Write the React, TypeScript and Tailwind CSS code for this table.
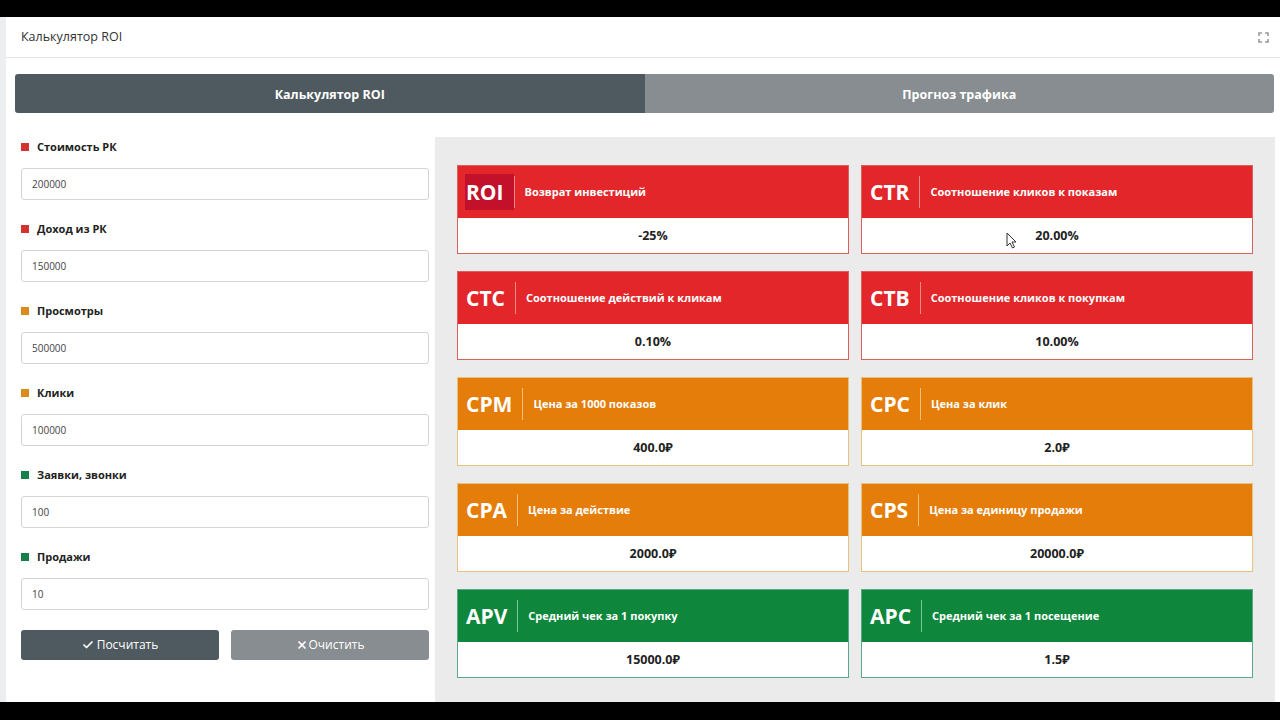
import React from 'react'
import { Check, X } from 'lucide-react'

type Tone = 'red' | 'orange' | 'green'

const TONES: Record<Tone, { head: string; border: string; divider: string; square: string }> = {
  red: { head: 'bg-[#e3262a]', border: 'border-[#d9605c]', divider: 'bg-[#f08a86]', square: 'bg-[#d13330]' },
  orange: { head: 'bg-[#e47d09]', border: 'border-[#e6c27a]', divider: 'bg-[#f6c27a]', square: 'bg-[#dc8a1c]' },
  green: { head: 'bg-[#0e873c]', border: 'border-[#58a98a]', divider: 'bg-[#7cc79a]', square: 'bg-[#17804a]' },
}

const FIELDS: { label: string; value: string; tone: Tone }[] = [
  { label: 'Стоимость РК', value: '200000', tone: 'red' },
  { label: 'Доход из РК', value: '150000', tone: 'red' },
  { label: 'Просмотры', value: '500000', tone: 'orange' },
  { label: 'Клики', value: '100000', tone: 'orange' },
  { label: 'Заявки, звонки', value: '100', tone: 'green' },
  { label: 'Продажи', value: '10', tone: 'green' },
]

const METRICS: { abbr: string; title: string; value: string; tone: Tone; active?: boolean; cursor?: boolean }[] = [
  { abbr: 'ROI', title: 'Возврат инвестиций', value: '-25%', tone: 'red', active: true },
  { abbr: 'CTR', title: 'Соотношение кликов к показам', value: '20.00%', tone: 'red', cursor: true },
  { abbr: 'CTC', title: 'Соотношение действий к кликам', value: '0.10%', tone: 'red' },
  { abbr: 'CTB', title: 'Соотношение кликов к покупкам', value: '10.00%', tone: 'red' },
  { abbr: 'CPM', title: 'Цена за 1000 показов', value: '400.0₽', tone: 'orange' },
  { abbr: 'CPC', title: 'Цена за клик', value: '2.0₽', tone: 'orange' },
  { abbr: 'CPA', title: 'Цена за действие', value: '2000.0₽', tone: 'orange' },
  { abbr: 'CPS', title: 'Цена за единицу продажи', value: '20000.0₽', tone: 'orange' },
  { abbr: 'APV', title: 'Средний чек за 1 покупку', value: '15000.0₽', tone: 'green' },
  { abbr: 'APC', title: 'Средний чек за 1 посещение', value: '1.5₽', tone: 'green' },
]

const FullscreenIcon = () => (
  <svg width="11" height="11" viewBox="0 0 11 11" fill="none" stroke="#9a9a9a" strokeWidth="1.6">
    <path d="M1 4V1h3M7 1h3v3M10 7v3H7M4 10H1V7" />
  </svg>
)

const Cursor = () => (
  <svg className="absolute left-[144px] top-[14px]" width="11" height="17" viewBox="0 0 11 17">
    <path d="M1 1v13l3-3 2.5 5 2-1-2.5-5H10z" fill="#fff" stroke="#333" strokeWidth="1" strokeLinejoin="round" />
  </svg>
)

const Field: React.FC<{ label: string; value: string; tone: Tone }> = ({ label, value, tone }) => (
  <div className="flex flex-col">
    <div className="flex h-[14px] items-center gap-[8px]">
      <span className={'h-[8px] w-[8px] ' + TONES[tone].square} />
      <span className="text-[11px] font-bold text-[#222]">{label}</span>
    </div>
    <input
      readOnly
      value={value}
      className="mt-[14px] h-[32px] w-full rounded-[3px] border border-[#d4d4d4] bg-white px-[10px] text-[10px] text-[#444] outline-none"
    />
  </div>
)

const MetricCard: React.FC<(typeof METRICS)[number]> = ({ abbr, title, value, tone, active, cursor }) => {
  const t = TONES[tone]
  return (
    <div className={'flex h-[89px] flex-col border ' + t.border}>
      <div className={'flex h-[52px] shrink-0 items-center pl-[7px] ' + t.head}>
        <span
          className={
            'flex h-[36px] items-center pl-[1px] pr-[10px] text-[21px] font-bold leading-none text-white ' +
            (active ? 'bg-[#c3112b]' : '')
          }
        >
          {abbr}
        </span>
        <span className={'h-[32px] w-px ' + t.divider} />
        <span className="pl-[10px] text-[11px] font-bold text-white">{title}</span>
      </div>
      <div className="relative flex flex-1 items-center justify-center bg-white pt-[1px] text-[12.5px] font-bold text-[#222]">
        {value}
        {cursor && <Cursor />}
      </div>
    </div>
  )
}

export default function App() {
  return (
    <div className="flex h-[720px] w-[1280px] flex-col overflow-hidden bg-black font-['Open_Sans','Noto_Sans',sans-serif]">
      <div className="h-[17px] shrink-0 bg-black" />
      <div className="flex h-[685px] shrink-0 bg-[#eceeef] pl-[6px]">
        <div className="flex flex-1 flex-col bg-white">
          <div className="flex h-[41px] shrink-0 items-center justify-between border-b border-[#e4e4e4] pl-[15px] pr-[11px]">
            <span className="text-[12.5px] text-[#333]">Калькулятор ROI</span>
            <FullscreenIcon />
          </div>

          <div className="flex flex-1 flex-col pl-[9px] pr-[5px] pt-[16px]">
            <div className="mr-[1px] grid h-[39px] shrink-0 grid-cols-2 overflow-hidden rounded-[3px] text-[12.5px] font-bold text-white">
              <div className="flex items-center justify-center pt-[3px] bg-[#4f5a60]">Калькулятор ROI</div>
              <div className="flex items-center justify-center pt-[3px] bg-[#878d90]">Прогноз трафика</div>
            </div>

            <div className="mt-[24px] flex flex-1">
              <div className="flex w-[420px] flex-col gap-[22px] px-[6px] pt-[3px]">
                {FIELDS.map((f) => (
                  <Field key={f.label} {...f} />
                ))}
                <div className="-mt-[2px] grid grid-cols-2 gap-[12px]">
                  <button className="flex h-[30px] items-center justify-center gap-[3px] rounded-[3px] bg-[#4f5a60] text-[12px] text-white">
                    <Check size={12} strokeWidth={3.5} />
                    Посчитать
                  </button>
                  <button className="flex h-[30px] items-center justify-center gap-[1px] rounded-[3px] bg-[#878d90] text-[12px] text-white">
                    <X size={12} strokeWidth={3.5} />
                    Очистить
                  </button>
                </div>
              </div>

              <div className="grid flex-1 grid-cols-2 content-start gap-x-[12px] gap-y-[17px] bg-[#ebebeb] pb-[20px] pl-[22px] pr-[22px] pt-[28px]">
                {METRICS.map((m) => (
                  <MetricCard key={m.abbr} {...m} />
                ))}
              </div>
            </div>
          </div>
        </div>
      </div>
      <div className="flex-1 bg-black" />
    </div>
  )
}
